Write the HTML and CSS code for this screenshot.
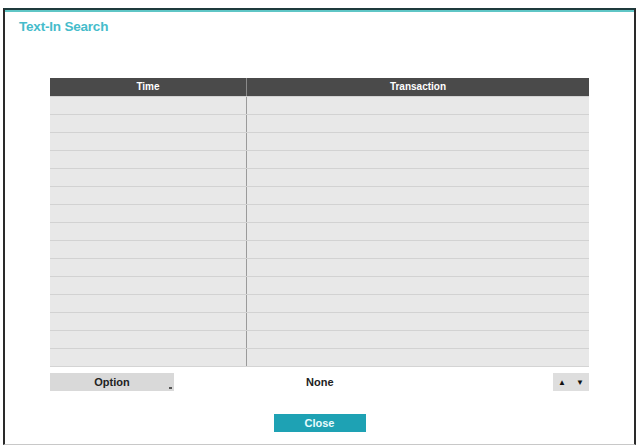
FILE: index.html
```html
<!DOCTYPE html>
<html lang="en">
<head>
    <meta charset="UTF-8">
    <title>Text-In Search</title>
    <link rel="stylesheet" href="styles.css">
</head>
<body>
    <div class="dialog">
        <h2 class="title">Text-In Search</h2>

        <div class="grid">
            <div class="head">
                <div class="col-time">Time</div>
                <div class="col-text">Transaction</div>
            </div>
            <div class="rows" id="rows"></div>
        </div>

        <div class="toolbar">
            <button class="option-button">Option<span class="corner"></span></button>
            <span class="filter">None</span>
            <div class="pager">
                <button class="pager-btn">&#9650;</button>
                <button class="pager-btn">&#9660;</button>
            </div>
        </div>

        <div class="footer">
            <button class="close-button">Close</button>
        </div>
    </div>

    <script>
        const rows = document.getElementById('rows');
        for (let i = 0; i < 15; i++) {
            rows.innerHTML += '<div class="row"><div class="col-time"></div><div class="col-text"></div></div>';
        }
    </script>
</body>
</html>
```

FILE: styles.css
```css
body {
    margin: 0;
    background: #ffffff;
    font-family: "Liberation Sans", Arial, sans-serif;
}
.dialog {
    margin: 8px 1px 3px 3px;
    height: 437px;
    box-sizing: border-box;
    border-top: 2px solid #1f3a3c;
    border-left: 2px solid #2a2a2a;
    border-right: 2px solid #2a2a2a;
    border-bottom: 1px solid #c8c8c8;
    box-shadow: inset 0 2px 0 #5fc6c6;
    display: flex;
    flex-direction: column;
}
.title {
    margin: 9px 0 0 14px;
    font-size: 13.5px;
    font-weight: bold;
    color: #45bccb;
    letter-spacing: -0.2px;
}
.grid {
    margin: 44px 0 0 45px;
    width: 539px;
    background: #e8e8e8;
    border-bottom: 1px solid #d4d4d4;
}
.head {
    display: flex;
    height: 18px;
    background: #4a4a4a;
    color: #ffffff;
    font-size: 10px;
    font-weight: bold;
    line-height: 18px;
    text-align: center;
}
.head .col-time {
    border-right: 1px solid #8a8a8a;
}
.col-time {
    width: 196px;
}
.col-text {
    flex: 1;
}
.row {
    display: flex;
    height: 17px;
    border-top: 1px solid #d2d2d2;
}
.row .col-time {
    border-right: 1px solid #9a9a9a;
}
.toolbar {
    display: flex;
    align-items: center;
    margin: 6px 0 0 45px;
    width: 539px;
    height: 18px;
}
button {
    border: none;
    font-family: inherit;
    cursor: pointer;
    padding: 0;
}
.option-button {
    position: relative;
    width: 124px;
    height: 18px;
    background: #d9d9d9;
    color: #222;
    font-size: 11px;
    font-weight: bold;
}
.corner {
    position: absolute;
    right: 2px;
    bottom: 2px;
    width: 3px;
    height: 2px;
    background: #555;
}
.filter {
    margin-left: 132px;
    font-size: 11px;
    font-weight: bold;
    color: #222;
}
.pager {
    margin-left: auto;
    display: flex;
    background: #dedede;
}
.pager-btn {
    width: 18px;
    height: 18px;
    background: transparent;
    font-size: 8px;
    color: #111;
}
.footer {
    display: flex;
    justify-content: center;
    margin-top: 23px;
}
.close-button {
    width: 92px;
    height: 18px;
    background: #1ea2b4;
    color: #e8fbfd;
    font-size: 11px;
    font-weight: bold;
}
```
